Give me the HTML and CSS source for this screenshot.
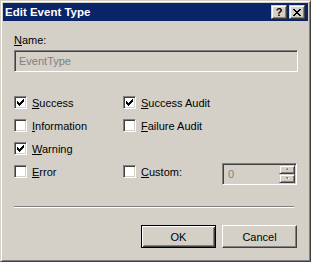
FILE: index.html
```html
<!DOCTYPE html>
<html>
<head>
    <title>Edit Event Type</title>
    <link rel="stylesheet" href="styles.css">
</head>
<body>
    <div class="window">
        <div class="titlebar">
            <span class="title">Edit Event Type</span>
            <span class="cap-btn help">?</span>
            <span class="cap-btn close">
                <svg width="8" height="7" viewBox="0 0 8 7" shape-rendering="crispEdges"><path d="M0 0h2v1H0z M6 0h2v1H6z M1 1h2v1H1z M5 1h2v1H5z M2 2h4v1H2z M3 3h2v1H3z M2 4h4v1H2z M1 5h2v1H1z M5 5h2v1H5z M0 6h2v1H0z M6 6h2v1H6z" fill="#000"/></svg>
            </span>
        </div>
        <div class="client">
            <label class="name-label"><u>N</u>ame:</label>
            <div class="textbox">EventType</div>

            <div class="options">
                <div class="check first">
                    <span class="box checked"><svg width="7" height="7" viewBox="0 0 7 7" shape-rendering="crispEdges"><path d="M6 0h1v1H6z M5 1h2v1H5z M0 2h1v1H0z M4 2h3v1H4z M0 3h2v1H0z M3 3h3v1H3z M0 4h5v1H0z M1 5h3v1H1z M2 6h1v1H2z" fill="#000"/></svg></span>
                    <span><u>S</u>uccess</span>
                </div>
                <div class="check">
                    <span class="box checked"><svg width="7" height="7" viewBox="0 0 7 7" shape-rendering="crispEdges"><path d="M6 0h1v1H6z M5 1h2v1H5z M0 2h1v1H0z M4 2h3v1H4z M0 3h2v1H0z M3 3h3v1H3z M0 4h5v1H0z M1 5h3v1H1z M2 6h1v1H2z" fill="#000"/></svg></span>
                    <span><u>S</u>uccess Audit</span>
                </div>
                <div class="check first">
                    <span class="box"></span>
                    <span><u>I</u>nformation</span>
                </div>
                <div class="check">
                    <span class="box"></span>
                    <span><u>F</u>ailure Audit</span>
                </div>
                <div class="check first">
                    <span class="box checked"><svg width="7" height="7" viewBox="0 0 7 7" shape-rendering="crispEdges"><path d="M6 0h1v1H6z M5 1h2v1H5z M0 2h1v1H0z M4 2h3v1H4z M0 3h2v1H0z M3 3h3v1H3z M0 4h5v1H0z M1 5h3v1H1z M2 6h1v1H2z" fill="#000"/></svg></span>
                    <span><u>W</u>arning</span>
                </div>
                <div class="check first">
                    <span class="box"></span>
                    <span><u>E</u>rror</span>
                </div>
                <div class="check">
                    <span class="box"></span>
                    <span><u>C</u>ustom:</span>
                </div>
                <div class="spinner">
                    <span class="spin-value">0</span>
                    <div class="spin-btns">
                        <span class="spin-btn">
                            <svg width="5" height="3" viewBox="0 0 6 4" shape-rendering="crispEdges"><path d="M3 1h1v1H3z M2 2h3v1H2z" fill="#fff"/><path d="M2 0h1v1H2z M1 1h3v1H1z" fill="#808080"/></svg>
                        </span>
                        <span class="spin-btn">
                            <svg width="5" height="3" viewBox="0 0 6 4" shape-rendering="crispEdges"><path d="M2 1h3v1H2z M3 2h1v1H3z" fill="#fff"/><path d="M1 0h3v1H1z M2 1h1v1H2z" fill="#808080"/></svg>
                        </span>
                    </div>
                </div>
            </div>

            <div class="separator"></div>

            <div class="buttons">
                <button class="btn default">OK</button>
                <button class="btn">Cancel</button>
            </div>
        </div>
    </div>
</body>
</html>
```

FILE: styles.css
```css
body {
    margin: 0;
    padding: 0;
    background-color: #d4d0c8;
    font-family: "Liberation Sans", Arial, sans-serif;
    font-size: 11px;
    color: #000;
}

.window {
    width: 311px;
    height: 262px;
    box-sizing: border-box;
    border: 1px solid;
    border-color: #d4d0c8 #404040 #404040 #d4d0c8;
    box-shadow: inset 1px 1px #fff, inset -1px -1px #808080;
    padding: 2px;
    background-color: #d4d0c8;
    display: flex;
    flex-direction: column;
}

.titlebar {
    height: 18px;
    background-color: #0a246a;
    color: #fff;
    display: flex;
    align-items: center;
    padding: 0 3px 0 2px;
}

.title {
    flex: 1;
    font-weight: bold;
    font-size: 11.5px;
}

.cap-btn {
    width: 16px;
    height: 14px;
    box-sizing: border-box;
    border: 1px solid;
    border-color: #d4d0c8 #404040 #404040 #d4d0c8;
    box-shadow: inset 1px 1px #fff, inset -1px -1px #808080;
    background-color: #d4d0c8;
    color: #000;
    display: flex;
    align-items: center;
    justify-content: center;
    font-weight: bold;
    font-size: 11px;
    line-height: 12px;
}

.cap-btn.close {
    margin-left: 2px;
}

.client {
    flex: 1;
    padding: 13px 11px 0 11px;
}

.name-label {
    display: block;
    line-height: 13px;
}

.textbox {
    margin-top: 3px;
    width: 284px;
    height: 22px;
    box-sizing: border-box;
    border: 1px solid;
    border-color: #808080 #fff #fff #808080;
    box-shadow: inset 1px 1px #404040, inset -1px -1px #d4d0c8;
    padding-left: 4px;
    color: #808080;
    display: flex;
    align-items: center;
}

.options {
    margin-top: 19px;
    display: grid;
    grid-template-columns: 109px 99px 75px;
    grid-auto-rows: 23px;
}

.check {
    display: flex;
    align-items: center;
    gap: 5px;
}

.check.first {
    grid-column: 1;
}

.box {
    width: 13px;
    height: 13px;
    box-sizing: border-box;
    border: 1px solid;
    border-color: #808080 #fff #fff #808080;
    box-shadow: inset 1px 1px #404040, inset -1px -1px #d4d0c8;
    background-color: #fff;
    display: flex;
    align-items: center;
    justify-content: center;
}

.spinner {
    align-self: start;
    margin-top: 3px;
    height: 22px;
    box-sizing: border-box;
    border: 1px solid;
    border-color: #808080 #fff #fff #808080;
    box-shadow: inset 1px 1px #404040, inset -1px -1px #d4d0c8;
    padding: 1px;
    display: flex;
}

.spin-value {
    flex: 1;
    color: #808080;
    padding-left: 4px;
    display: flex;
    align-items: center;
}

.spin-btns {
    width: 16px;
    display: flex;
    flex-direction: column;
}

.spin-btn {
    flex: 1;
    box-sizing: border-box;
    border: 1px solid;
    border-color: #d4d0c8 #404040 #404040 #d4d0c8;
    box-shadow: inset 1px 1px #fff, inset -1px -1px #808080;
    display: flex;
    align-items: center;
    justify-content: center;
}

.separator {
    margin-top: 23px;
    width: 280px;
    border-top: 1px solid #808080;
    border-bottom: 1px solid #fff;
}

.buttons {
    margin-top: 17px;
    display: flex;
    justify-content: flex-end;
    gap: 6px;
}

.btn {
    width: 75px;
    height: 23px;
    padding: 0;
    font: inherit;
    color: #000;
    background-color: #d4d0c8;
    border: 1px solid;
    border-color: #fff #404040 #404040 #fff;
    box-shadow: inset -1px -1px #808080, inset 1px 1px #d4d0c8;
}

.btn.default {
    border: 1px solid #000;
    box-shadow: inset 1px 1px #fff, inset -1px -1px #404040, inset 2px 2px #d4d0c8, inset -2px -2px #808080;
}
```
